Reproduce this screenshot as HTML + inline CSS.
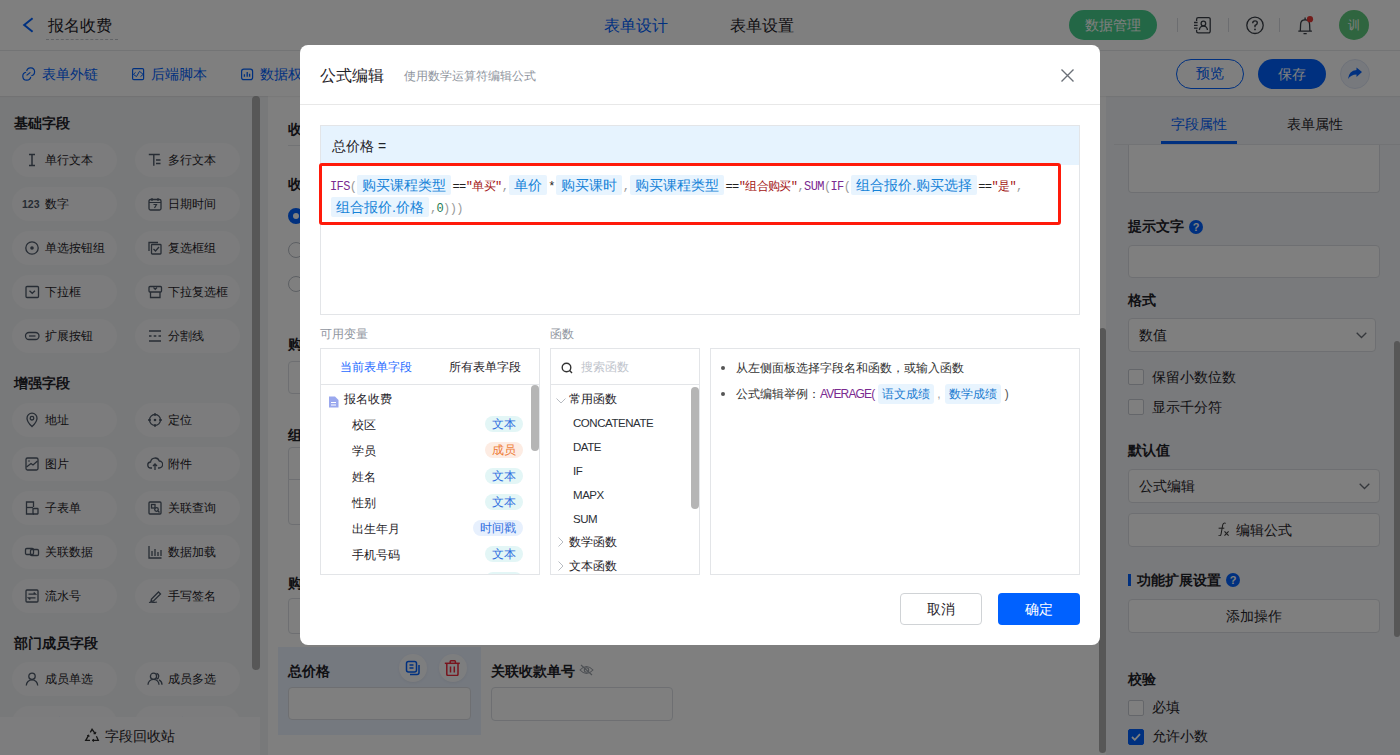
<!DOCTYPE html>
<html><head><meta charset="utf-8">
<style>
*{box-sizing:border-box;margin:0;padding:0}
html,body{width:1400px;height:755px;overflow:hidden}
body{font-family:"Liberation Sans",sans-serif;color:#1f2329;background:#fff;position:relative}
.a{position:absolute}
.t{position:absolute;white-space:nowrap;line-height:20px}
svg{display:block}
/* header */
#hdr{left:0;top:0;width:1400px;height:51px;background:#fff;border-bottom:1px solid #e6e8eb}
#tb{left:0;top:51px;width:1400px;height:45px;background:#fff;box-shadow:0 1px 1px rgba(0,0,0,.05);z-index:1}
.sep{position:absolute;width:1px;height:14px;top:18px;background:#d8dbe0}
.pill{position:absolute;border-radius:16px;text-align:center;font-size:14px;line-height:30px;height:30px}
/* left */
#left{left:0;top:96px;width:268px;height:659px;background:#f1f2f4}
.sec{position:absolute;left:14px;font-size:14px;font-weight:bold;line-height:20px}
.fb{position:absolute;width:105px;height:34px;border-radius:17px;background:#f8f9fa;font-size:12px;line-height:34px;color:#1f2329}
.fb .ic{position:absolute;left:12px;top:9px}
.fb span{position:absolute;left:33px;top:0}
/* canvas */
#canvas{left:268px;top:96px;width:838px;height:659px;background:#fff}
.lbl{position:absolute;font-size:14px;font-weight:bold;line-height:20px}
.inp{position:absolute;border:1px solid #dcdfe4;border-radius:4px;background:#fff}
/* right */
#right{left:1106px;top:96px;width:294px;height:659px;background:#f3f5f8}
.rl{position:absolute;left:22px;font-size:14px;font-weight:bold;line-height:20px}
.cb{position:absolute;left:22px;width:16px;height:16px;border:1px solid #c9cdd4;border-radius:2px;background:#fff}
.ct{position:absolute;left:46px;font-size:14px;line-height:20px}
#mask{left:0;top:0;width:1400px;height:755px;background:rgba(0,0,0,.5);z-index:5}
/* modal */
#code span{vertical-align:top;position:relative;top:2px}
#code span.ch{top:0}
.kw{color:#7a2a90}.pn{color:#9a9a9a}.op{color:#222}.st{color:#a31515}.nm{color:#1e7a52}
.ch{display:inline-block;height:20px;line-height:20px;margin:1px 1px;padding:0 5px;background:#e8f4fe;color:#1683d8;font-family:"Liberation Sans",sans-serif;font-size:14px;letter-spacing:0;border-radius:2px}
.tg{position:absolute;right:16px;height:16px;line-height:16px;padding:0 7px;border-radius:8px;font-size:12px}
.tg1{background:#e3f6f6;color:#2f6ee0}.tg2{background:#fdece3;color:#ed7b35}.tg3{background:#e7f0fd;color:#2f6ee0}
.ch2{display:inline-block;height:20px;line-height:20px;padding:0 4px;background:#e8f4fe;color:#1a7bd0;border-radius:3px}
#modal{left:300px;top:45px;width:800px;height:600px;background:#fff;border-radius:8px;z-index:6}
</style></head><body>

<!-- ============ HEADER ============ -->
<div id="hdr" class="a">
  <svg class="a" style="left:22px;top:17px" width="12" height="16" viewBox="0 0 12 16"><path d="M10.6 1.2 L2.2 8 L10.6 14.8" fill="none" stroke="#0061ff" stroke-width="2"/></svg>
  <div class="t" style="left:48px;top:16px;font-size:16px;line-height:20px;color:#1f2329">报名收费</div>
  <div class="a" style="left:46px;top:39px;width:72px;border-top:1px dashed #c3c7cc"></div>
  <div class="t" style="left:604px;top:16px;font-size:16px;color:#0061ff">表单设计</div>
  <div class="t" style="left:730px;top:16px;font-size:16px;color:#1f2329">表单设置</div>
  <div class="pill" style="left:1069px;top:10px;width:88px;background:#46cf8c;color:#fff">数据管理</div>
  <div class="sep" style="left:1177px"></div>
  <svg class="a" style="left:1190px;top:12px" width="26" height="26" viewBox="1190 12 26 26" fill="none" stroke="#3a3f47" stroke-width="1.3"><path d="M1196.6 21V19.2a1.6 1.6 0 0 1 1.6-1.6H1208.6a1.6 1.6 0 0 1 1.6 1.6V31.3a1.6 1.6 0 0 1-1.6 1.6H1198.2a1.6 1.6 0 0 1-1.6-1.6V29.8"/><path d="M1194 22.5h3.6M1194 25.4h3.6M1194 28.2h3.6"/><circle cx="1203.4" cy="23.5" r="2.3"/><path d="M1199.4 30a4 4 0 0 1 8 0"/></svg>
  <div class="sep" style="left:1228px"></div>
  <svg class="a" style="left:1245px;top:15px" width="20" height="20" viewBox="1245 15 20 20" fill="none" stroke="#3a3f47" stroke-width="1.3"><circle cx="1255" cy="25.3" r="8.2"/><path d="M1252.7 23.2Q1252.7 20.9 1255 20.9Q1257.3 20.9 1257.3 23Q1257.3 24.4 1255 25.5V27.2" stroke-width="1.4"/><circle cx="1255" cy="29.4" r="0.9" fill="#3a3f47" stroke="none"/></svg>
  <div class="sep" style="left:1279px"></div>
  <svg class="a" style="left:1295px;top:14px" width="20" height="22" viewBox="1295 14 20 22" fill="none" stroke="#3a3f47" stroke-width="1.3"><path d="M1298.3 31.2H1311.9M1300.3 31.2L1300.6 24.6Q1300.6 19.9 1305.1 19.9Q1309.6 19.9 1309.6 24.6L1309.9 31.2"/><path d="M1305.1 17.4V19.9M1303.5 33.7H1306.7"/><circle cx="1310" cy="19.2" r="3.1" fill="#e53935" stroke="none"/></svg>
  <div class="a" style="left:1339px;top:10px;width:30px;height:30px;border-radius:50%;background:#5fca7e;color:#fff;font-size:12px;line-height:30px;text-align:center">训</div>
</div>

<!-- ============ TOOLBAR ============ -->
<div id="tb" class="a">
  <svg class="a" style="left:20px;top:15px" width="18" height="18" viewBox="20 66 18 18" fill="none" stroke="#0061ff" stroke-width="1.2"><path d="M26.11 72.26 A4 4 0 1 0 30.74 76.89"/><path d="M31.29 75.74 A4 4 0 1 0 26.66 71.11"/><path d="M26.6 75.4 L30.4 72.4"/></svg>
  <div class="t" style="left:42px;top:13px;font-size:14px;color:#0061ff">表单外链</div>
  <svg class="a" style="left:130px;top:15px" width="16" height="16" viewBox="130 66 16 16" fill="none" stroke="#0061ff" stroke-width="1.2"><rect x="132.6" y="68.6" width="11" height="11" rx="1.2"/><path d="M135.6 72.3L133.4 74.4L136.5 76.6L139.5 71.3L143.2 74.4L140.5 76.6" stroke-width="1"/></svg>
  <div class="t" style="left:151px;top:13px;font-size:14px;color:#0061ff">后端脚本</div>
  <svg class="a" style="left:239px;top:15px" width="16" height="16" viewBox="239 66 16 16" fill="none" stroke="#0061ff" stroke-width="1.2"><rect x="241.6" y="69.2" width="11" height="10.4" rx="2.2"/><path d="M244.4 74.2v2.5M247.2 72v4.7M249.6 73.7v3" stroke-width="1.3"/></svg>
  <div class="t" style="left:260px;top:13px;font-size:14px;color:#0061ff">数据权限</div>
  <div class="pill" style="left:1176px;top:8px;width:68px;border:1.5px solid #0061ff;color:#0061ff;line-height:27px">预览</div>
  <div class="pill" style="left:1258px;top:8px;width:68px;background:#0061ff;color:#fff">保存</div>
  <div class="a" style="left:1340px;top:8px;width:30px;height:30px;border-radius:50%;background:#eef2fb;border:1px solid #dde4f3"></div>
  <svg class="a" style="left:1346px;top:15px" width="18" height="16" viewBox="0 0 18 16"><path d="M16 6 L10.5 1.5 L10.5 4 Q3 4.5 2 13 Q5 8.5 10.5 8.5 L10.5 11 Z" fill="#0061ff"/></svg>
</div>

<!-- ============ LEFT ============ -->
<div id="left" class="a">
  <div class="sec" style="top:17px">基础字段</div>
  <div class="fb" style="left:12px;top:47px"><svg class="ic" width="16" height="16" viewBox="0 0 16 16" fill="none" stroke="#4e5969" stroke-width="1.3"><path d="M5 2.5h6M8 2.5v11M5 13.5h6" stroke-width="1.5"/></svg><span>单行文本</span></div>
  <div class="fb" style="left:135px;top:47px"><svg class="ic" width="16" height="16" viewBox="0 0 16 16" fill="none" stroke="#4e5969" stroke-width="1.3"><path d="M1.8 2.5h11M6.8 2.5v11.2M9 8h4.5M9 11.5h4.5" stroke-width="1.4"/></svg><span>多行文本</span></div>
  <div class="fb" style="left:12px;top:91px"><svg class="ic" width="18" height="16" viewBox="0 0 18 16" style="left:10px"><text x="0" y="12" font-family="Liberation Sans" font-weight="bold" font-size="10.5" fill="#4e5969">123</text></svg><span>数字</span></div>
  <div class="fb" style="left:135px;top:91px"><svg class="ic" width="16" height="16" viewBox="0 0 16 16" fill="none" stroke="#4e5969" stroke-width="1.3"><rect x="2" y="3.5" width="12" height="10.5" rx="1.5"/><path d="M2 6.5h12M5 2v3M11 2v3M7.5 12l2-3.5h-3" stroke-width="1.2"/></svg><span>日期时间</span></div>
  <div class="fb" style="left:12px;top:135px"><svg class="ic" width="16" height="16" viewBox="0 0 16 16" fill="none" stroke="#4e5969" stroke-width="1.3"><circle cx="8" cy="8" r="6.2"/><circle cx="8" cy="8" r="1.8" fill="#4e5969" stroke="none"/></svg><span>单选按钮组</span></div>
  <div class="fb" style="left:135px;top:135px"><svg class="ic" width="16" height="16" viewBox="0 0 16 16" fill="none" stroke="#4e5969" stroke-width="1.3"><path d="M2 11V2.5h9"/><rect x="4.5" y="4.5" width="9.5" height="9.5" rx="0.8"/><path d="M6.5 9l2 2 3.5-4"/></svg><span>复选框组</span></div>
  <div class="fb" style="left:12px;top:179px"><svg class="ic" width="16" height="16" viewBox="0 0 16 16" fill="none" stroke="#4e5969" stroke-width="1.3"><rect x="2" y="2.5" width="12.5" height="11" rx="1"/><path d="M5.5 6.8l2.75 2.5 2.75-2.5"/></svg><span>下拉框</span></div>
  <div class="fb" style="left:135px;top:179px"><svg class="ic" width="16" height="16" viewBox="0 0 16 16" fill="none" stroke="#4e5969" stroke-width="1.3"><rect x="2" y="2.5" width="12.5" height="5.5" rx="1"/><path d="M3.5 8v5.5h9.5V8"/><path d="M6.5 3.5l1.75 1.8 1.75-1.8" stroke-width="1.2"/></svg><span>下拉复选框</span></div>
  <div class="fb" style="left:12px;top:223px"><svg class="ic" width="16" height="16" viewBox="0 0 16 16" fill="none" stroke="#4e5969" stroke-width="1.3"><rect x="1.5" y="4.5" width="13.5" height="7" rx="3.5"/><path d="M5 8h6.5"/></svg><span>扩展按钮</span></div>
  <div class="fb" style="left:135px;top:223px"><svg class="ic" width="16" height="16" viewBox="0 0 16 16" fill="none" stroke="#4e5969" stroke-width="1.3"><path d="M2 3h12M2 8h2.5M6.7 8h2.6M11.5 8H14M2 13h12"/></svg><span>分割线</span></div>
  <div class="sec" style="top:277px">增强字段</div>
  <div class="fb" style="left:12px;top:307px"><svg class="ic" width="16" height="16" viewBox="0 0 16 16" fill="none" stroke="#4e5969" stroke-width="1.3"><path d="M8 14.5s-5-4.6-5-8.3a5 5 0 0 1 10 0c0 3.7-5 8.3-5 8.3z"/><circle cx="8" cy="6.2" r="1.8"/></svg><span>地址</span></div>
  <div class="fb" style="left:135px;top:307px"><svg class="ic" width="16" height="16" viewBox="0 0 16 16" fill="none" stroke="#4e5969" stroke-width="1.3"><circle cx="8" cy="8" r="5.5"/><circle cx="8" cy="8" r="1.3" fill="#4e5969" stroke="none"/><path d="M8 1v3M8 12v3M1 8h3M12 8h3"/></svg><span>定位</span></div>
  <div class="fb" style="left:12px;top:351px"><svg class="ic" width="16" height="16" viewBox="0 0 16 16" fill="none" stroke="#4e5969" stroke-width="1.3"><rect x="2" y="2" width="12" height="12" rx="1.5"/><path d="M2.5 11L7 7.5l2 1.5 4.5-4"/><circle cx="5" cy="5" r="0.8" fill="#4e5969" stroke="none"/></svg><span>图片</span></div>
  <div class="fb" style="left:135px;top:351px"><svg class="ic" width="16" height="16" viewBox="0 0 16 16" fill="none" stroke="#4e5969" stroke-width="1.3"><path d="M5 12H4a3 3 0 0 1-.4-6A4.5 4.5 0 0 1 12.3 5 3.5 3.5 0 0 1 12 12h-1"/><path d="M8 8v6M6 10l2-2 2 2"/></svg><span>附件</span></div>
  <div class="fb" style="left:12px;top:395px"><svg class="ic" width="16" height="16" viewBox="0 0 16 16" fill="none" stroke="#4e5969" stroke-width="1.3"><path d="M10 14H2.5V2h7v5"/><path d="M2.5 7.5H9"/><rect x="9" y="8.5" width="5" height="5.5" rx="0.5"/></svg><span>子表单</span></div>
  <div class="fb" style="left:135px;top:395px"><svg class="ic" width="16" height="16" viewBox="0 0 16 16" fill="none" stroke="#4e5969" stroke-width="1.3"><rect x="2" y="2" width="12" height="12" rx="1"/><rect x="4.5" y="4.5" width="3.5" height="3.5"/><circle cx="9.5" cy="9.5" r="1.8"/><path d="M10.8 10.8l1.7 1.7"/></svg><span>关联查询</span></div>
  <div class="fb" style="left:12px;top:439px"><svg class="ic" width="16" height="16" viewBox="0 0 16 16" fill="none" stroke="#4e5969" stroke-width="1.3"><rect x="1.5" y="4.5" width="8" height="6" rx="1.2"/><rect x="6.5" y="5.5" width="8" height="6" rx="1.2"/></svg><span>关联数据</span></div>
  <div class="fb" style="left:135px;top:439px"><svg class="ic" width="16" height="16" viewBox="0 0 16 16" fill="none" stroke="#4e5969" stroke-width="1.3"><path d="M2 2v12h12.5M5 12V7M8 12V5M11 12V8M14 12V6"/></svg><span>数据加载</span></div>
  <div class="fb" style="left:12px;top:483px"><svg class="ic" width="16" height="16" viewBox="0 0 16 16" fill="none" stroke="#4e5969" stroke-width="1.3"><rect x="2" y="2" width="12" height="12" rx="1"/><path d="M4.5 6.2h7l-1.8-1.6M11.5 9.8h-7l1.8 1.6"/></svg><span>流水号</span></div>
  <div class="fb" style="left:135px;top:483px"><svg class="ic" width="16" height="16" viewBox="0 0 16 16" fill="none" stroke="#4e5969" stroke-width="1.3"><path d="M4.5 11l-.5 2.5 2.5-.5 7-7-2-2z"/><path d="M2 14.5c3-1 5 .5 8-.5"/></svg><span>手写签名</span></div>
  <div class="sec" style="top:537px">部门成员字段</div>
  <div class="fb" style="left:12px;top:566px"><svg class="ic" width="16" height="16" viewBox="0 0 16 16" fill="none" stroke="#4e5969" stroke-width="1.3"><circle cx="8" cy="5.3" r="3.2"/><path d="M2.3 14.5a5.7 5.7 0 0 1 11.4 0"/></svg><span>成员单选</span></div>
  <div class="fb" style="left:135px;top:566px"><svg class="ic" width="16" height="16" viewBox="0 0 16 16" fill="none" stroke="#4e5969" stroke-width="1.3"><circle cx="6.5" cy="5.3" r="3.1"/><path d="M1 13.8a5.5 5.5 0 0 1 11 0"/><path d="M9.5 2.3a3 3 0 0 1 0 5.8M12 8.8a5.5 5.5 0 0 1 3 5"/></svg><span>成员多选</span></div>
  <div class="fb" style="left:12px;top:610px"><span>部门单选</span></div>
  <div class="fb" style="left:135px;top:610px"><span>部门多选</span></div>
  <div class="a" style="left:252px;top:0;width:8px;height:574px;border-radius:4px;background:#afafaf"></div>
  <div class="a" style="left:0;top:621px;width:260px;height:38px;background:#fbfbfc"></div>
  <svg class="a" style="left:82px;top:629px" width="20" height="18" viewBox="82 725 20 18" fill="none" stroke="#2a2a2a" stroke-width="1.3"><path d="M90.3 732.3L92.05 729.3L95 733.4"/><path d="M93.6 733.6L95.3 733.6L95.9 731.9" stroke-width="1.1"/><path d="M96.4 736.2L98.3 740.3H92.6"/><path d="M93.8 739.1L92.6 740.3L93.8 741.5" stroke-width="1.1"/><path d="M90 740.3H85.7L88.6 735.3"/><path d="M87.1 735.7L88.6 735.2L89.2 736.7" stroke-width="1.1"/></svg><div class="t" style="left:105px;top:630px;font-size:14px">字段回收站</div>
</div>

<!-- ============ CANVAS ============ -->
<div id="canvas" class="a">
  <div class="lbl" style="left:20px;top:23px">收费信息</div>
  <div class="a" style="left:20px;top:49px;width:800px;height:1px;background:#e4e6ea"></div>
  <div class="lbl" style="left:20px;top:78px">收费方式</div>
  <div class="a" style="left:20px;top:112px;width:16px;height:16px;border-radius:50%;border:5px solid #0061ff;background:#fff"></div>
  <div class="a" style="left:20px;top:146px;width:16px;height:16px;border-radius:50%;border:1px solid #b9bec6;background:#fff"></div>
  <div class="a" style="left:20px;top:180px;width:16px;height:16px;border-radius:50%;border:1px solid #b9bec6;background:#fff"></div>
  <div class="lbl" style="left:20px;top:238px">购买课程类型</div>
  <div class="inp" style="left:20px;top:265px;width:600px;height:33px"></div>
  <div class="lbl" style="left:20px;top:329px">组合报价</div>
  <div class="inp" style="left:20px;top:351px;width:600px;height:33px;border-radius:4px 4px 0 0"></div>
  <div class="inp" style="left:20px;top:383px;width:600px;height:46px;border-radius:0 0 4px 4px"></div>
  <div class="lbl" style="left:20px;top:477px">购买课时</div>
  <div class="inp" style="left:20px;top:502px;width:600px;height:36px"></div>
  <div class="a" style="left:10px;top:551px;width:203px;height:88px;background:#eaf2ff"></div>
  <div class="lbl" style="left:20px;top:565px">总价格</div>
  <div class="a" style="left:131px;top:558px;width:28px;height:28px;border-radius:50%;background:#fbfcff;box-shadow:0 1px 3px rgba(0,0,0,.06)"></div>
  <svg class="a" style="left:137px;top:564px" width="16" height="16" viewBox="0 0 16 16"><rect x="1.5" y="1.5" width="10" height="10.5" rx="2" fill="none" stroke="#0061ff" stroke-width="1.5"/><path d="M4.5 5h4M4.5 8h4" stroke="#0061ff" stroke-width="1.5"/><path d="M14 5v7.5a2 2 0 0 1-2 2H5" fill="none" stroke="#0061ff" stroke-width="1.5"/></svg>
  <div class="a" style="left:171px;top:558px;width:28px;height:28px;border-radius:50%;background:#fbfcff;box-shadow:0 1px 3px rgba(0,0,0,.06)"></div>
  <svg class="a" style="left:175px;top:562px" width="18" height="18" viewBox="443 658 18 18" fill="none" stroke="#f0283a" stroke-width="1.5"><path d="M450.2 663V661.6Q450.2 660.8 451 660.8H454.6Q455.4 660.8 455.4 661.6V663"/><path d="M444.8 663.3H459.8"/><path d="M446.8 663.5V674.2Q446.8 675.4 448 675.4H456.8Q458 675.4 458 674.2V663.5"/><path d="M450.5 666.5V672.6M454.3 666.5V672.6"/></svg>
  <div class="inp" style="left:20px;top:591px;width:183px;height:33px"></div>
  <div class="lbl" style="left:223px;top:565px">关联收款单号</div>
  <svg class="a" style="left:311px;top:568px" width="15" height="12" viewBox="0 0 15 12"><path d="M1 6Q7.5 -1 14 6Q7.5 13 1 6Z" fill="none" stroke="#9aa0a8" stroke-width="1.1"/><circle cx="7.5" cy="6" r="2.2" fill="none" stroke="#9aa0a8" stroke-width="1.1"/><path d="M2 1L13 11" stroke="#9aa0a8" stroke-width="1.1"/></svg>
  <div class="inp" style="left:223px;top:591px;width:182px;height:34px"></div>
  <div class="a" style="left:831px;top:232px;width:7px;height:425px;border-radius:4px;background:#afafaf"></div>
</div>

<!-- ============ RIGHT ============ -->
<div id="right" class="a">
  <div class="t" style="left:65px;top:18px;font-size:14px;color:#0061ff">字段属性</div>
  <div class="t" style="left:181px;top:18px;font-size:14px">表单属性</div>
  <div class="a" style="left:8px;top:48px;width:286px;height:1px;background:#e4e6ea"></div>
  <div class="a" style="left:55px;top:45px;width:76px;height:3px;background:#0061ff"></div>
  <div class="inp" style="left:22px;top:49px;width:252px;height:48px;border-top:0;border-radius:0 0 4px 4px"></div>
  <div class="rl" style="top:120px">提示文字</div>
  <div class="a" style="left:83px;top:124px;width:14px;height:14px;border-radius:50%;background:#0061ff;color:#fff;font-size:11px;line-height:14px;text-align:center;font-weight:bold">?</div>
  <div class="inp" style="left:22px;top:149px;width:252px;height:33px"></div>
  <div class="rl" style="top:194px">格式</div>
  <div class="inp" style="left:22px;top:222px;width:248px;height:34px"></div>
  <div class="t" style="left:33px;top:229px;font-size:14px">数值</div>
  <svg class="a" style="left:250px;top:236px" width="11" height="7" viewBox="0 0 11 7"><path d="M0.7 0.7L5.5 5.5L10.3 0.7" fill="none" stroke="#6b7078" stroke-width="1.3"/></svg>
  <div class="cb" style="top:273px"></div>
  <div class="ct" style="top:271px">保留小数位数</div>
  <div class="cb" style="top:303px"></div>
  <div class="ct" style="top:301px">显示千分符</div>
  <div class="rl" style="top:344px">默认值</div>
  <div class="inp" style="left:22px;top:373px;width:252px;height:34px"></div>
  <div class="t" style="left:33px;top:380px;font-size:14px">公式编辑</div>
  <svg class="a" style="left:253px;top:387px" width="11" height="7" viewBox="0 0 11 7"><path d="M0.7 0.7L5.5 5.5L10.3 0.7" fill="none" stroke="#6b7078" stroke-width="1.3"/></svg>
  <div class="inp" style="left:22px;top:417px;width:252px;height:34px"></div>
  <svg class="a" style="left:110px;top:424px" width="14" height="16" viewBox="1216 520 14 16" fill="none" stroke="#3a3a3a" stroke-width="1.05"><path d="M1225.8 523.4C1224 522.5 1222.9 523.5 1222.6 525.5L1221.1 533.8C1220.8 535.6 1219.9 536.2 1218.4 535.7"/><path d="M1218.6 528.2H1224.3"/><path d="M1224.5 531.4L1228.6 535.6M1228.6 531.4L1224.5 535.6" stroke-width="1.1"/></svg>
  <div class="t" style="left:130px;top:424px;font-size:14px">编辑公式</div>
  <div class="a" style="left:22px;top:478px;width:3px;height:12px;background:#0061ff"></div>
  <div class="rl" style="left:31px;top:474px">功能扩展设置</div>
  <div class="a" style="left:120px;top:477px;width:14px;height:14px;border-radius:50%;background:#0061ff;color:#fff;font-size:11px;line-height:14px;text-align:center;font-weight:bold">?</div>
  <div class="inp" style="left:22px;top:503px;width:252px;height:34px"></div>
  <div class="t" style="left:120px;top:510px;font-size:14px">添加操作</div>
  <div class="rl" style="top:573px">校验</div>
  <div class="cb" style="top:604px"></div>
  <div class="ct" style="top:601px">必填</div>
  <div class="cb" style="top:633px;background:#0061ff;border-color:#0061ff"></div>
  <svg class="a" style="left:25px;top:637px" width="10" height="8" viewBox="0 0 10 8"><path d="M1 4L3.8 6.8L9 1.2" fill="none" stroke="#fff" stroke-width="1.8"/></svg>
  <div class="ct" style="top:630px">允许小数</div>
  <div class="a" style="left:288px;top:245px;width:6px;height:296px;border-radius:3px;background:#afafaf"></div>
</div>

<div id="mask" class="a"></div>

<!-- ============ MODAL ============ -->
<div id="modal" class="a">
  <div class="t" style="left:20px;top:21px;font-size:16px;color:#1f2329">公式编辑</div>
  <div class="t" style="left:104px;top:21px;font-size:12px;color:#8f959e">使用数学运算符编辑公式</div>
  <svg class="a" style="left:761px;top:24px" width="13" height="13" viewBox="0 0 13 13"><path d="M0.5 0.5L12.5 12.5M12.5 0.5L0.5 12.5" stroke="#6b7078" stroke-width="1.4"/></svg>
  <div class="a" style="left:0;top:59px;width:800px;height:1px;background:#e8e8e8"></div>
  <!-- formula box -->
  <div class="a" style="left:20px;top:80px;width:760px;height:190px;border:1px solid #e3e5e8">
    <div class="a" style="left:0;top:0;width:758px;height:39px;background:#e6f3fe"></div>
    <div class="t" style="left:11px;top:10px;font-size:14px;color:#1f2329">总价格 =</div>
  </div>
  <div class="a" style="left:19px;top:118px;width:742px;height:62px;border:3px solid #ff1a0a;border-radius:3px"></div>
  <div id="code" class="a" style="left:30px;top:129px;width:720px;font-family:'Liberation Mono',monospace;font-size:12px;letter-spacing:-0.6px;line-height:22px;color:#333"><span class="kw">IFS</span><span class="pn">(</span><span class="ch">购买课程类型</span><span class="op">==</span><span class="st">"单买"</span><span class="pn">,</span><span class="ch">单价</span><span class="op">*</span><span class="ch">购买课时</span><span class="pn">,</span><span class="ch">购买课程类型</span><span class="op">==</span><span class="st">"组合购买"</span><span class="pn">,</span><span class="kw">SUM</span><span class="pn">(</span><span class="kw">IF</span><span class="pn">(</span><span class="ch">组合报价.购买选择</span><span class="op">==</span><span class="st">"是"</span><span class="pn">,</span><br><span class="ch">组合报价.价格</span><span class="pn">,</span><span class="nm">0</span><span class="pn">)))</span>
  </div>
  <!-- labels -->
  <div class="t" style="left:20px;top:279px;font-size:12px;color:#8f959e">可用变量</div>
  <div class="t" style="left:250px;top:279px;font-size:12px;color:#8f959e">函数</div>
  <!-- var panel -->
  <div class="a" style="left:20px;top:303px;width:220px;height:227px;border:1px solid #e3e5e8;overflow:hidden">
    <div class="a" style="left:0;top:35px;width:218px;height:1px;background:#e3e5e8"></div>
    <div class="t" style="left:19px;top:8px;font-size:12px;color:#1f6bff">当前表单字段</div>
    <div class="t" style="left:128px;top:8px;font-size:12px;color:#1f2329">所有表单字段</div>
    <svg class="a" style="left:7px;top:47px" width="11" height="12" viewBox="0 0 11 12"><path d="M1 0.5h6l3.5 3.5v7.5h-9.5z" fill="#9aa8ee"/><path d="M3 6.5h5M3 9h5" stroke="#fff" stroke-width="1"/></svg>
    <div class="t" style="left:23px;top:40px;font-size:12px;color:#1f2329">报名收费</div>
    <div class="t" style="left:31px;top:66px;font-size:12px;color:#1f2329">校区</div>
    <div class="tg tg1" style="top:67px">文本</div>
    <div class="t" style="left:31px;top:92px;font-size:12px;color:#1f2329">学员</div>
    <div class="tg tg2" style="top:93px">成员</div>
    <div class="t" style="left:31px;top:118px;font-size:12px;color:#1f2329">姓名</div>
    <div class="tg tg1" style="top:119px">文本</div>
    <div class="t" style="left:31px;top:144px;font-size:12px;color:#1f2329">性别</div>
    <div class="tg tg1" style="top:145px">文本</div>
    <div class="t" style="left:31px;top:170px;font-size:12px;color:#1f2329">出生年月</div>
    <div class="tg tg3" style="top:171px">时间戳</div>
    <div class="t" style="left:31px;top:196px;font-size:12px;color:#1f2329">手机号码</div>
    <div class="tg tg1" style="top:197px">文本</div>
    
    <div class="tg tg1" style="top:223px">文本</div>
    <div class="a" style="left:210px;top:36px;width:8px;height:66px;border-radius:4px;background:#b5b5b5"></div>
  </div>
  <!-- fn panel -->
  <div class="a" style="left:250px;top:303px;width:150px;height:227px;border:1px solid #e3e5e8;overflow:hidden">
    <div class="a" style="left:0;top:35px;width:148px;height:1px;background:#e3e5e8"></div>
    <div class="t" style="left:30px;top:8px;font-size:12px;color:#c0c4cc">搜索函数</div>
    <svg class="a" style="left:10px;top:13px" width="12" height="12" viewBox="0 0 12 12"><circle cx="5.5" cy="5.5" r="4.3" fill="none" stroke="#333" stroke-width="1.4"/><path d="M8.6 8.6L11 11" stroke="#333" stroke-width="1.4"/></svg>
    <svg class="a" style="left:5px;top:49px" width="10" height="6" viewBox="0 0 10 6"><path d="M0.5 0.5L5 5L9.5 0.5" fill="none" stroke="#b8bcc2" stroke-width="1"/></svg>
    <div class="t" style="left:18px;top:40px;font-size:12px;color:#1f2329">常用函数</div>
    <div class="t" style="left:22px;top:64px;font-size:11.5px;letter-spacing:-0.45px;color:#2b2f36">CONCATENATE</div>
    <div class="t" style="left:22px;top:88px;font-size:11.5px;letter-spacing:-0.45px;color:#2b2f36">DATE</div>
    <div class="t" style="left:22px;top:112px;font-size:11.5px;letter-spacing:-0.45px;color:#2b2f36">IF</div>
    <div class="t" style="left:22px;top:136px;font-size:11.5px;letter-spacing:-0.45px;color:#2b2f36">MAPX</div>
    <div class="t" style="left:22px;top:160px;font-size:11.5px;letter-spacing:-0.45px;color:#2b2f36">SUM</div>
    <svg class="a" style="left:7px;top:188px" width="6" height="10" viewBox="0 0 6 10"><path d="M0.5 0.5L5 5L0.5 9.5" fill="none" stroke="#b8bcc2" stroke-width="1"/></svg>
    <div class="t" style="left:18px;top:183px;font-size:12px;color:#1f2329">数学函数</div>
    <svg class="a" style="left:7px;top:212px" width="6" height="10" viewBox="0 0 6 10"><path d="M0.5 0.5L5 5L0.5 9.5" fill="none" stroke="#b8bcc2" stroke-width="1"/></svg>
    <div class="t" style="left:18px;top:207px;font-size:12px;color:#1f2329">文本函数</div>
    <div class="a" style="left:140px;top:38px;width:8px;height:122px;border-radius:4px;background:#b5b5b5"></div>
  </div>
  <!-- desc panel -->
  <div class="a" style="left:410px;top:303px;width:370px;height:227px;border:1px solid #e3e5e8">
    <div class="a" style="left:10px;top:17px;width:4px;height:4px;border-radius:50%;background:#555"></div>
    <div class="t" style="left:25px;top:9px;font-size:12px;color:#333">从左侧面板选择字段名和函数，或输入函数</div>
    <div class="a" style="left:10px;top:43px;width:4px;height:4px;border-radius:50%;background:#555"></div>
    <div class="t" style="left:25px;top:35px;font-size:12px;color:#333">公式编辑举例：<span style="color:#7a2a90;letter-spacing:-0.85px">AVERAGE(</span><span class="ch2" style="margin-left:4px">语文成绩</span><span style="color:#999;margin:0 4px 0 3px">,</span><span class="ch2">数学成绩</span><span style="color:#555;margin-left:4px">)</span></div>
  </div>
  <!-- buttons -->
  <div class="a" style="left:600px;top:548px;width:82px;height:32px;border:1px solid #d0d3d6;border-radius:4px;font-size:14px;line-height:30px;text-align:center;color:#1f2329">取消</div>
  <div class="a" style="left:698px;top:548px;width:82px;height:32px;background:#0061ff;border-radius:4px;font-size:14px;line-height:32px;text-align:center;color:#fff">确定</div>
</div>

</body></html>
